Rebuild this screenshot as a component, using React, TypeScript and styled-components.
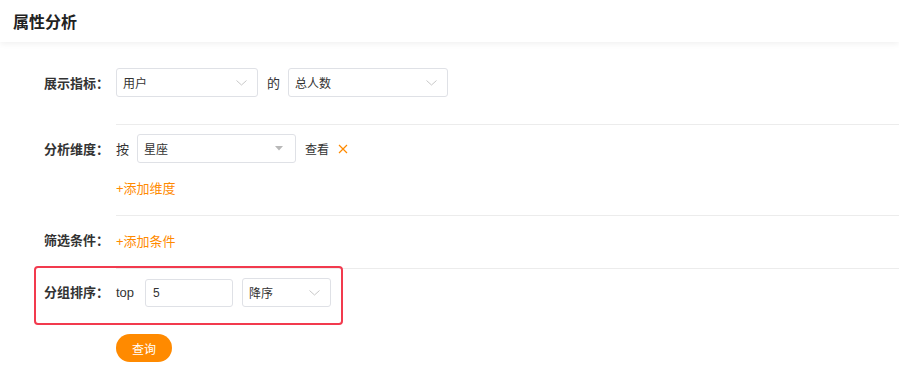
import React, { useState } from "react";
import styled, { createGlobalStyle } from "styled-components";

const ORANGE = "#ff8a00";
const TEXT = "#333";
const LINE = "#ececec";

const GlobalStyle = createGlobalStyle`
  html, body {
    margin: 0;
    padding: 0;
    background: #fff;
    font-family: "Liberation Sans", "Noto Sans CJK SC", sans-serif;
    color: ${TEXT};
  }
  * { box-sizing: border-box; }
`;

type SelectProps = {
  value: string;
  width: number;
  caret?: boolean;
};

const Chevron = () => (
  <svg width="11" height="6" viewBox="0 0 11 6" fill="none">
    <path d="M0.5 0.5 L5.5 5 L10.5 0.5" stroke="#c8c8c8" strokeWidth="1" />
  </svg>
);

const Caret = () => (
  <svg width="8" height="5" viewBox="0 0 8 5">
    <path d="M0 0 H8 L4 4.5 Z" fill="#b8b8b8" />
  </svg>
);

const CloseIcon = () => (
  <svg width="10" height="10" viewBox="0 0 10 10" fill="none">
    <path d="M1 1 L9 9 M9 1 L1 9" stroke={ORANGE} strokeWidth="1.2" />
  </svg>
);

const Select = ({ value, width, caret }: SelectProps) => (
  <StyledSelect width={width}>
    <span>{value}</span>
    <StyledIcon caret={caret}>{caret ? <Caret /> : <Chevron />}</StyledIcon>
  </StyledSelect>
);

const App = () => {
  const [top, setTop] = useState("5");

  return (
    <>
      <GlobalStyle />
      <StyledPage>
        <StyledHeader>属性分析</StyledHeader>
        <StyledForm>
          <StyledSection padTop={26} padBottom={27}>
            <StyledLabel h={28}>展示指标：</StyledLabel>
            <StyledContent>
              <StyledLine>
                <Select value="用户" width={142} />
                <StyledWord gap={9}>的</StyledWord>
                <Select value="总人数" width={160} />
              </StyledLine>
            </StyledContent>
          </StyledSection>

          <StyledSection divided padTop={9} padBottom={19}>
            <StyledLabel h={28}>分析维度：</StyledLabel>
            <StyledContent>
              <StyledLine>
                <StyledWord gap={0}>按</StyledWord>
                <Select value="星座" width={159} caret />
                <StyledSmall>查看</StyledSmall>
                <StyledClose>
                  <CloseIcon />
                </StyledClose>
              </StyledLine>
              <StyledAdd>+添加维度</StyledAdd>
            </StyledContent>
          </StyledSection>

          <StyledSection divided padTop={15} padBottom={19}>
            <StyledLabel h={17}>筛选条件：</StyledLabel>
            <StyledContent>
              <StyledAdd>+添加条件</StyledAdd>
            </StyledContent>
          </StyledSection>

          <StyledSection divided highlight padTop={9} padBottom={0}>
            <StyledLabel h={27}>分组排序：</StyledLabel>
            <StyledContent>
              <StyledLine>
                <StyledWord gap={0}>top</StyledWord>
                <StyledInput
                  value={top}
                  onChange={(e) => setTop(e.target.value)}
                />
                <Select value="降序" width={89} />
              </StyledLine>
            </StyledContent>
          </StyledSection>

          <StyledActions>
            <StyledButton>查询</StyledButton>
          </StyledActions>
        </StyledForm>
      </StyledPage>
    </>
  );
};

export default App;

const StyledPage = styled.div`
  width: 899px;
  min-height: 377px;
  background: #fff;
`;

const StyledHeader = styled.div`
  height: 42px;
  padding-left: 13px;
  display: flex;
  align-items: center;
  font-size: 16px;
  font-weight: 600;
  color: #222;
  box-shadow: 0 2px 6px rgba(0, 0, 0, 0.06);
  position: relative;
`;

const StyledForm = styled.div`
  padding-left: 44px;
`;

const StyledSection = styled.div<{
  divided?: boolean;
  highlight?: boolean;
  padTop: number;
  padBottom: number;
}>`
  display: grid;
  grid-template-columns: 72px 1fr;
  position: relative;

  > div:last-child {
    border-top: ${(p) => (p.divided ? `1px solid ${LINE}` : "none")};
    padding-top: ${(p) => p.padTop}px;
    padding-bottom: ${(p) => p.padBottom}px;
  }

  > span:first-child {
    margin-top: ${(p) => p.padTop + (p.divided ? 1 : 0)}px;
  }

  ${(p) =>
    p.highlight &&
    `
    &::after {
      content: "";
      position: absolute;
      left: -10px;
      top: -2px;
      width: 305px;
      height: 55px;
      border: 2px solid #f23a4e;
      border-radius: 4px;
      pointer-events: none;
    }
  `}
`;

const StyledLabel = styled.span<{ h: number }>`
  height: ${(p) => p.h}px;
  display: flex;
  align-items: center;
  font-size: 13px;
  font-weight: 700;
  color: ${TEXT};
  white-space: nowrap;
`;

const StyledContent = styled.div`
  display: flex;
  flex-direction: column;
  gap: 15px;
`;

const StyledLine = styled.div`
  display: flex;
  align-items: center;
`;

const StyledSelect = styled.div<{ width: number }>`
  width: ${(p) => p.width}px;
  height: 29px;
  border: 1px solid #dfe1e6;
  border-radius: 3px;
  padding: 0 10px 0 6px;
  display: flex;
  align-items: center;
  justify-content: space-between;
  font-size: 12px;
  color: ${TEXT};
`;

const StyledIcon = styled.span<{ caret?: boolean }>`
  display: flex;
  align-items: center;
  margin-right: ${(p) => (p.caret ? 2 : 0)}px;
`;

const StyledWord = styled.span<{ gap: number }>`
  font-size: 13px;
  color: ${TEXT};
  margin-left: ${(p) => p.gap}px;
  margin-right: 8px;
`;

const StyledSmall = styled.span`
  font-size: 12px;
  color: ${TEXT};
  margin-left: 9px;
`;

const StyledClose = styled.span`
  display: flex;
  align-items: center;
  margin-left: 9px;
`;

const StyledAdd = styled.span`
  height: 18px;
  display: flex;
  align-items: center;
  font-size: 13px;
  color: ${ORANGE};
`;

const StyledInput = styled.input`
  width: 88px;
  height: 28px;
  border: 1px solid #dfe1e6;
  border-radius: 3px;
  padding: 0 7px;
  margin: 0 9px 0 3px;
  font-size: 12px;
  font-family: inherit;
  color: ${TEXT};
  outline: none;
`;

const StyledActions = styled.div`
  padding: 27px 0 0 72px;
`;

const StyledButton = styled.button`
  width: 56px;
  height: 28px;
  border: none;
  border-radius: 14px;
  background: ${ORANGE};
  color: #fff;
  font-size: 12px;
  font-family: inherit;
  cursor: pointer;
`;
